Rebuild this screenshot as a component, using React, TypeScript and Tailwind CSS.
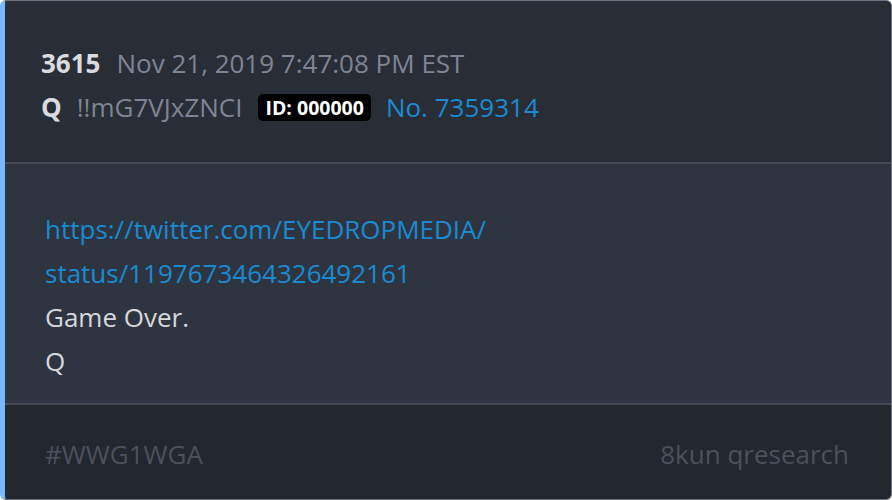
import React from "react";

export default function App() {
  return (
    <div className="w-[892px] h-[500px] bg-white" style={{ fontFamily: '"Open Sans", sans-serif' }}>
      <div className="w-full h-full flex flex-col rounded-[6px] overflow-hidden border border-[#6b707c] border-l-[5px] border-l-[#79b8ff] bg-[#23272e]">
        <div className="bg-[#292d36] pl-[36px] pt-[40px] h-[163px] border-b-2 border-[#454a55]">
          <div className="flex items-center h-[44px] text-[26px]">
            <span className="font-bold text-[#d9dbdf]">3615</span>
            <span className="ml-[16px] text-[#7f8593]">Nov 21, 2019 7:47:08 PM EST</span>
          </div>
          <div className="flex items-center h-[44px] text-[26px]">
            <span className="font-bold text-[#d9dbdf]">Q</span>
            <span className="ml-[15px] text-[#7f8593]">!!mG7VJxZNCI</span>
            <span className="ml-[16px] bg-black text-white font-bold text-[19.5px] leading-[27px] px-[7px] rounded-[5px]">ID: 000000</span>
            <span className="ml-[15px] text-[#1a8ad2]">No. 7359314</span>
          </div>
        </div>
        <div className="bg-[#2f3540] pl-[40px] pt-[43px] h-[241px] border-b-2 border-[#454a55] text-[26px] leading-[44px]">
          <a className="text-[#1a8ad2] block">https://twitter.com/EYEDROPMEDIA/<br />status/1197673464326492161</a>
          <div className="text-[#d6d8dc]">Game Over.</div>
          <div className="text-[#d6d8dc]">Q</div>
        </div>
        <div className="flex-1 flex justify-between pl-[40px] pr-[42px] pt-[27px] text-[26px] leading-[44px] text-[#4b515c]">
          <span>#WWG1WGA</span>
          <span>8kun qresearch</span>
        </div>
      </div>
    </div>
  );
}
